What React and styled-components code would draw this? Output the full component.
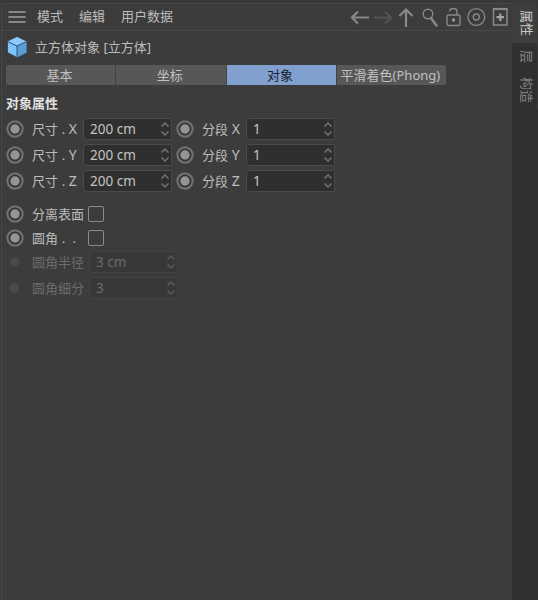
import React from "react";
import styled, { createGlobalStyle } from "styled-components";

const GlobalStyle = createGlobalStyle`
  * {
    box-sizing: border-box;
  }

  body {
    margin: 0;
    background: #3c3c3c;
    color: #bcbcbc;
    font-family: "Noto Sans", "Noto Sans CJK SC", sans-serif;
    font-size: 13px;
    line-height: 20px;
  }
`;

const Window = styled.div`
  display: flex;
  height: 600px;
  overflow: hidden;
  padding-top: 3px;
  background: #393939;
`;

const Panel = styled.main`
  flex: 1;
  min-width: 0;
  margin-left: 1px;
  border-left: 1px solid #484848;
  border-top: 1px solid #484848;
  background: #3c3c3c;
`;

const MenuBar = styled.header`
  display: flex;
  align-items: center;
  height: 27px;
  padding-left: 6px;
  border-bottom: 1px solid #484848;
`;

const MenuItem = styled.span`
  height: 22px;
  margin-left: ${({ $gap }) => $gap || 16}px;
  white-space: nowrap;
`;

const Tools = styled.div`
  display: flex;
  align-items: center;
  margin-left: auto;
  padding-right: 1px;
`;

const ObjectTitle = styled.div`
  display: flex;
  align-items: center;
  gap: 7px;
  height: 34px;
  padding: 0 0 2px 4px;
`;

const Tabs = styled.nav`
  display: flex;
  width: 440px;
  height: 20px;
  margin-left: 4px;
  border-radius: 2px;
  overflow: hidden;
`;

const Tab = styled.div`
  flex: 1;
  padding-right: 2px;
  text-align: center;
  white-space: nowrap;
  background: ${({ $active }) => ($active ? "#82a0cd" : "#575757")};
  color: ${({ $active }) => ($active ? "#17202e" : "#c0c0c0")};

  & + & {
    border-left: 1px solid #434343;
  }
`;

const SectionTitle = styled.h2`
  margin: 8px 0 3px 4px;
  font-size: 13px;
  line-height: 20px;
  font-weight: 700;
  color: #e0e0e0;
`;

const Row = styled.div`
  display: flex;
  align-items: center;
  height: ${({ $height }) => $height || 26}px;
  margin-top: ${({ $top }) => $top || 0}px;
  padding-left: 4px;
  color: ${({ $disabled }) => ($disabled ? "#6b6b6b" : "#bcbcbc")};
`;

const Label = styled.span`
  width: ${({ $width }) => $width}px;
  margin-left: 8px;
  white-space: pre;
  word-spacing: 0.3px;
`;

const Axis = styled.span`
  font-size: 14px;
  line-height: 1;
`;

const Field = styled.div`
  display: flex;
  align-items: center;
  justify-content: space-between;
  width: 89px;
  height: 22px;
  padding: 0 1px 0 6px;
  border: 1px solid ${({ $disabled }) => ($disabled ? "#434343" : "#4a4a4a")};
  border-radius: 3px 0 0 3px;
  background: ${({ $disabled }) => ($disabled ? "#383838" : "#2f2f2f")};
  color: ${({ $disabled }) => ($disabled ? "#6b6b6b" : "#c4c4c4")};
  font-size: 13.5px;
`;

const Checkbox = styled.div`
  width: 16px;
  height: 16px;
  border: 1px solid #8a8a8a;
  border-radius: 2px;
`;

const Pair = styled.div`
  display: flex;
  align-items: center;
  margin-left: 4px;
`;

const Sidebar = styled.aside`
  display: flex;
  flex-direction: column;
  width: 26px;
  background: #303030;
`;

const SideTab = styled.div`
  height: ${({ $height }) => $height}px;
  padding-top: ${({ $top }) => $top}px;
  width: 26px;
  line-height: 21px;
  writing-mode: vertical-rl;
  text-orientation: sideways;
  background: ${({ $active }) => ($active ? "#3e3e3e" : "transparent")};
  color: ${({ $active }) => ($active ? "#c8c8c8" : "#868686")};
  border-right: 1px solid #383838;
`;

const Svg = styled.svg`
  display: block;
  flex: none;
  fill: none;
  stroke: ${({ $stroke }) => $stroke || "#888"};
`;

const HamburgerIcon = () => (
  <Svg width="18" height="14" strokeWidth="2">
    <path d="M0.500 2h17M0.500 7h17M0.500 12h17" />
  </Svg>
);

const CubeIcon = () => (
  <Svg width="22" height="24" strokeLinejoin="round" $stroke="#29455f">
    <path d="M11 2L20.500 6.500V17.500L11 22.500L1.500 17.500V6.500Z" fill="#7fc3fb" strokeWidth="0.800" />
    <path d="M11 2L20.500 6.500L11 11L1.500 6.500Z" fill="#8ccbfc" stroke="none" />
    <path d="M11 11L20.500 6.500V17.500L11 22.500Z" fill="#5b9ed6" stroke="none" />
    <path d="M1.500 6.500L11 11L20.500 6.500M11 11V22.500" strokeWidth="0.900" />
  </Svg>
);

const ToolIcons = () => (
  <Svg width="164" height="24">
    <g strokeWidth="2.2">
      <path d="M22 12.500H5M11 6.500L5 12.500L11 18.500" />
      <path d="M27 12.500H44M38 6.500L44 12.500L38 18.500" stroke="#525252" />
      <path d="M59 22V5M52.500 11L59 4.500L65.500 11" />
    </g>
    <circle cx="81" cy="9" r="4.800" strokeWidth="1.400" />
    <path d="M84 13L89.500 20.500" strokeWidth="2.500" strokeLinecap="round" />
    <rect x="100" y="10" width="13" height="10.500" rx="1.500" strokeWidth="1.400" />
    <path d="M102.500 6.500V6Q103 3.500 106.500 3.500Q110 3.500 110 7V10" strokeWidth="1.400" />
    <circle cx="106.500" cy="15" r="1.700" fill="#999" stroke="none" />
    <circle cx="129.300" cy="12" r="8.400" strokeWidth="1.400" />
    <circle cx="129.300" cy="12" r="3" strokeWidth="1.400" />
    <rect x="146.500" y="4" width="13.500" height="16" strokeWidth="1.500" />
    <path d="M146 4H160.500" strokeWidth="2.200" />
    <path d="M153.300 8.500V16M149.500 12.200H157" strokeWidth="2.200" stroke="#a5a5a5" />
  </Svg>
);

const KeyDot = ({ disabled }) =>
  disabled ? (
    <Svg width="18" height="18">
      <circle cx="8.500" cy="9" r="4.500" fill="#4a4a4a" stroke="#464646" />
    </Svg>
  ) : (
    <Svg width="18" height="18">
      <circle cx="9" cy="9" r="7.600" fill="#343434" stroke="#707070" strokeWidth="2.200" />
      <circle cx="9" cy="9" r="4.700" fill="#949494" stroke="none" />
    </Svg>
  );

const NumberField = ({ value, disabled }) => (
  <Field $disabled={disabled}>
    {value}
    <Svg width="10" height="16" strokeWidth="1.500" $stroke={disabled ? "#5a5a5a" : "#747474"}>
      <path d="M1.500 5.500L5 2L8.500 5.500M1.500 10.500L5 14L8.500 10.500" />
    </Svg>
  </Field>
);

const axes = ["X", "Y", "Z"];

const App = () => (
  <>
    <GlobalStyle />
    <Window>
      <Panel>
        <MenuBar>
          <HamburgerIcon />
          <MenuItem $gap={11}>模式</MenuItem>
          <MenuItem>编辑</MenuItem>
          <MenuItem>用户数据</MenuItem>
          <Tools>
            <ToolIcons />
          </Tools>
        </MenuBar>
        <ObjectTitle>
          <CubeIcon />
          立方体对象 [立方体]
        </ObjectTitle>
        <Tabs>
          <Tab>基本</Tab>
          <Tab>坐标</Tab>
          <Tab $active>对象</Tab>
          <Tab>平滑着色(Phong)</Tab>
        </Tabs>
        <SectionTitle>对象属性</SectionTitle>
        {axes.map((axis) => (
          <Row key={axis}>
            <KeyDot />
            <Label $width={51}>尺寸 . <Axis>{axis}</Axis></Label>
            <NumberField value="200 cm" />
            <Pair>
              <KeyDot />
              <Label $width={44}>分段 <Axis>{axis}</Axis></Label>
              <NumberField value="1" />
            </Pair>
          </Row>
        ))}
        <Row $top={8} $height={24}>
          <KeyDot />
          <Label $width={56}>分离表面</Label>
          <Checkbox />
        </Row>
        <Row $height={23}>
          <KeyDot />
          <Label $width={56}>圆角 .  .</Label>
          <Checkbox />
        </Row>
        <Row $disabled>
          <KeyDot disabled />
          <Label $width={57}>圆角半径</Label>
          <NumberField value="3 cm" disabled />
        </Row>
        <Row $disabled>
          <KeyDot disabled />
          <Label $width={57}>圆角细分</Label>
          <NumberField value="3" disabled />
        </Row>
      </Panel>
      <Sidebar>
        <SideTab $active $height={40} $top={7}>属性</SideTab>
        <SideTab $height={27} $top={7}>层</SideTab>
        <SideTab $height={40} $top={7}>构造</SideTab>
      </Sidebar>
    </Window>
  </>
);

export default App;
